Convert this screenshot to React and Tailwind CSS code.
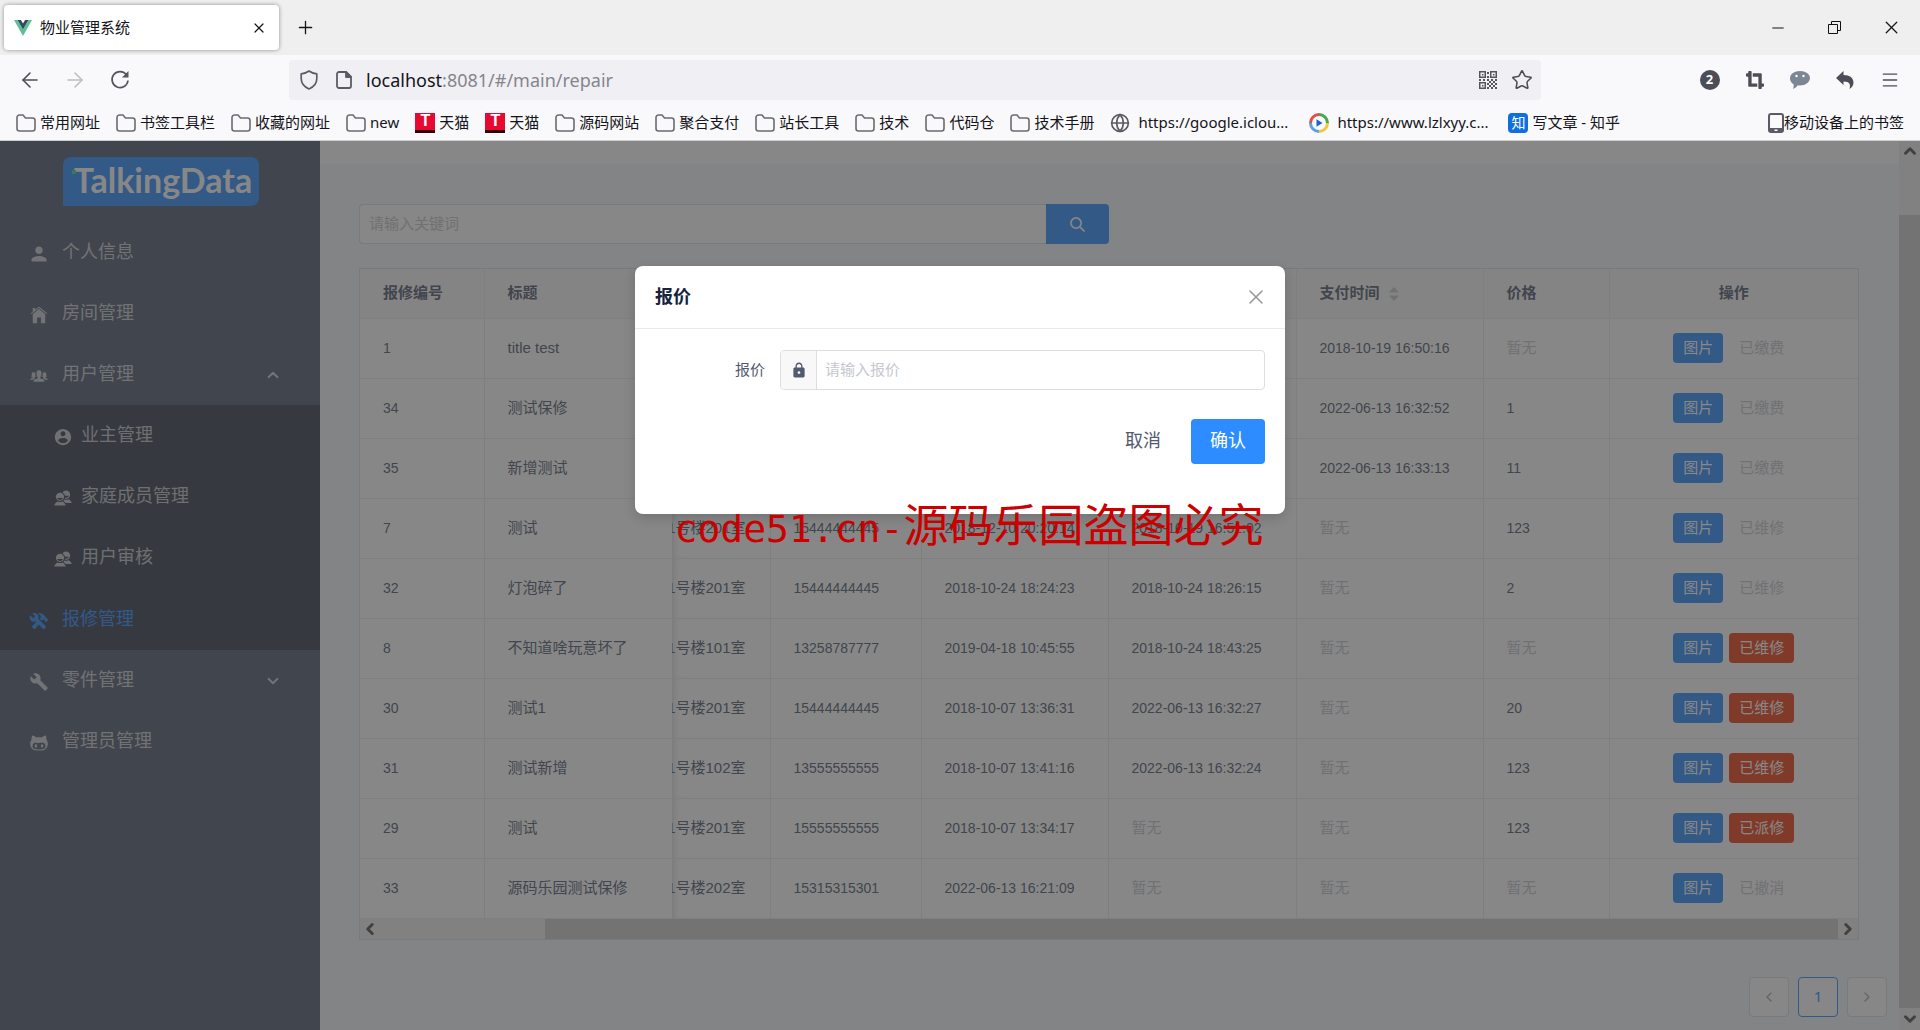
import React, { useState } from "react";
import {
  IoMdPerson,
  IoIosHome,
  IoMdContact,
  IoMdContacts,
  IoIosPeople,
  IoMdConstruct,
  IoMdBuild,
  IoMdLock,
  IoIosSearch,
  IoLogoOctocat,
} from "react-icons/io";
import { FaCropAlt } from "react-icons/fa";
import {
  ArrowLeft,
  ArrowRight,
  ChevronDown,
  ChevronLeft,
  ChevronRight,
  ChevronUp,
  Globe,
  Menu,
  Minus,
  Plus,
  Star,
  X,
} from "lucide-react";

const bookmarks = [
  { icon: "folder", label: "常用网址" },
  { icon: "folder", label: "书签工具栏" },
  { icon: "folder", label: "收藏的网址" },
  { icon: "folder", label: "new" },
  { icon: "tmall", label: "天猫" },
  { icon: "tmall", label: "天猫" },
  { icon: "folder", label: "源码网站" },
  { icon: "folder", label: "聚合支付" },
  { icon: "folder", label: "站长工具" },
  { icon: "folder", label: "技术" },
  { icon: "folder", label: "代码仓" },
  { icon: "folder", label: "技术手册" },
  { icon: "globe", label: "https://google.iclou...", wide: true },
  { icon: "player", label: "https://www.lzlxyy.c...", wide: true },
  { icon: "zhihu", label: "写文章 - 知乎" },
];

const rows = [
  { id: "1", title: "title test", paid: "2018-10-19 16:50:16", status: "已缴费" },
  { id: "34", title: "测试保修", paid: "2022-06-13 16:32:52", price: "1", status: "已缴费" },
  { id: "35", title: "新增测试", paid: "2022-06-13 16:33:13", price: "11", status: "已缴费" },
  { id: "7", title: "测试", room: "1号楼201室", phone: "15444444445", created: "2018-12-10 20:20:14", fixed: "2018-10-19 16:51:02", price: "123", status: "已维修" },
  { id: "32", title: "灯泡碎了", room: "1号楼201室", phone: "15444444445", created: "2018-10-24 18:24:23", fixed: "2018-10-24 18:26:15", price: "2", status: "已维修" },
  { id: "8", title: "不知道啥玩意坏了", room: "1号楼101室", phone: "13258787777", created: "2019-04-18 10:45:55", fixed: "2018-10-24 18:43:25", status: "已维修", active: true },
  { id: "30", title: "测试1", room: "1号楼201室", phone: "15444444445", created: "2018-10-07 13:36:31", fixed: "2022-06-13 16:32:27", price: "20", status: "已维修", active: true },
  { id: "31", title: "测试新增", room: "1号楼102室", phone: "13555555555", created: "2018-10-07 13:41:16", fixed: "2022-06-13 16:32:24", price: "123", status: "已维修", active: true },
  { id: "29", title: "测试", room: "1号楼201室", phone: "15555555555", created: "2018-10-07 13:34:17", fixed: "暂无", price: "123", status: "已派修", active: true },
  { id: "33", title: "源码乐园测试保修", room: "1号楼202室", phone: "15315315301", created: "2022-06-13 16:21:09", fixed: "暂无", status: "已撤消" },
];

const VueLogo = () => (
  <svg width="18" height="16" viewBox="0 0 18 16">
    <path d="M0 0h3.6L9 9.4 14.4 0H18L9 16z" fill="#5fbf94" />
    <path d="M3.6 0h3.3L9 3.6 11.1 0h3.3L9 9.4z" fill="#35495e" />
  </svg>
);

const FolderIcon = () => (
  <svg width="20" height="18" viewBox="0 0 20 18" fill="none" stroke="#6b6b70" strokeWidth="1.6">
    <path d="M1 14.5v-11A2.5 2.5 0 0 1 3.5 1H7l2.5 3h7A2.5 2.5 0 0 1 19 6.5v8a2.5 2.5 0 0 1-2.5 2.5h-13A2.5 2.5 0 0 1 1 14.5z" />
  </svg>
);

const PlayerIcon = () => (
  <svg width="20" height="20" viewBox="0 0 20 20" fill="none" strokeWidth="3" className="mr-1">
    <path d="M10 1.5A8.5 8.5 0 0 1 18.5 10" stroke="#46a84e" />
    <path d="M18.5 10A8.5 8.5 0 0 1 10 18.5" stroke="#f4c542" />
    <path d="M10 18.5A8.5 8.5 0 0 1 1.5 10" stroke="#5aa0ea" />
    <path d="M1.5 10A8.5 8.5 0 0 1 10 1.5" stroke="#e2504a" />
    <path d="M7.5 6.2l6 3.8-6 3.8z" fill="#1f5fd0" />
  </svg>
);

const BookmarkIcon = ({ type }) => {
  if (type === "folder") return <FolderIcon />;
  if (type === "globe") return <Globe size={20} strokeWidth={2} className="mr-1 text-[#5b5b66]" />;
  if (type === "player") return <PlayerIcon />;
  if (type === "zhihu")
    return (
      <span className="flex h-5 w-5 items-center justify-center rounded-sm bg-[#0f6fe0] text-[14px] leading-none text-white">知</span>
    );
  return (
    <span className="flex h-5 w-5 items-center justify-center border-b-3 border-[#3a000a] bg-[#e60a33] font-['Liberation_Sans'] text-[16px] font-bold leading-none text-white">
      T
    </span>
  );
};

const ReloadIcon = () => (
  <svg width="20" height="20" viewBox="0 0 20 20" fill="none" stroke="#55555e" strokeWidth="1.7">
    <path d="M16.6 5A8 8 0 1 0 18 10.5" />
    <path d="M18.5 1v6.5H12z" fill="#55555e" stroke="none" />
  </svg>
);

const ShieldIcon = () => (
  <svg width="20" height="20" viewBox="0 0 20 20" fill="none" stroke="#5b5b66" strokeWidth="1.7" strokeLinejoin="round">
    <path d="M10 1c2.2 1.6 5 2.6 7.8 2.9v4.6c0 4.3-3 8.3-7.8 10.5-4.8-2.2-7.8-6.2-7.8-10.5V3.9C5 3.6 7.8 2.6 10 1z" />
  </svg>
);

const PageIcon = () => (
  <svg width="16" height="18" viewBox="0 0 16 18" fill="none" stroke="#5b5b66" strokeWidth="1.8" strokeLinejoin="round">
    <path d="M3 1h7l5 5v9a2 2 0 0 1-2 2H3a2 2 0 0 1-2-2V3a2 2 0 0 1 2-2z" />
    <path d="M10 1v5h5z" fill="#5b5b66" />
  </svg>
);

const QrIcon = () => (
  <svg width="18" height="18" viewBox="0 0 18 18" fill="#55555e">
    <path fillRule="evenodd" d="M0 0h7v7H0zM1.5 1.5v4h4v-4zM11 0h7v7h-7zM12.5 1.5v4h4v-4zM0 11h7v7H0zM1.5 12.5v4h4v-4z" />
    <path d="M3 3h1.5v1.5H3zM14 3h1.5v1.5H14zM3 14h1.5v1.5H3zM8 1h2v2H8zM8 5h2v2H8zM0 8h2v2H0zM4 8h2v2H4zM8 8h2v2H8zM12 8h2v2h-2zM16 8h2v2h-2zM10 10h2v2h-2zM14 10h2v2h-2zM8 12h2v2H8zM12 12h2v2h-2zM16 12h2v2h-2zM10 14h2v2h-2zM14 14h2v2h-2zM8 16h2v2H8zM12 16h2v2h-2zM16 16h2v2h-2z" />
  </svg>
);

const PhoneIcon = () => (
  <svg width="16" height="20" viewBox="0 0 16 20">
    <path fillRule="evenodd" fill="#5b5b66" d="M3 0h10a3 3 0 0 1 3 3v14a3 3 0 0 1-3 3H3a3 3 0 0 1-3-3V3a3 3 0 0 1 3-3zM2 3v12h12V3a1 1 0 0 0-1-1H3a1 1 0 0 0-1 1zM6.5 16.5V18h3v-1.5z" />
  </svg>
);

const RestoreIcon = () => (
  <svg width="13" height="13" viewBox="0 0 13 13" fill="none" stroke="#111">
    <path d="M.5 3.5h9v9h-9zM3.5 3.5v-3h9v9h-3" />
  </svg>
);

const BrowserChrome = () => (
  <header className="border-b border-[#cfcfd2] bg-[#f9f9fb] font-['Noto_Sans','Noto_Sans_CJK_SC',sans-serif] text-[15px] text-[#15141a]">
    <div className="flex h-[55px] items-center bg-[#efefef] pl-1">
      <div className="flex h-[45px] w-[275px] items-center gap-2 rounded bg-white pr-2 pl-[10px] shadow-[0_0_4px_rgba(0,0,0,0.4)]">
        <VueLogo />
        <span className="flex-1">物业管理系统</span>
        <button aria-label="关闭标签页" className="px-1">
          <X size={16} strokeWidth={1.8} />
        </button>
      </div>
      <button aria-label="新标签页" className="ml-4">
        <Plus size={21} strokeWidth={1.5} />
      </button>
      <div className="ml-auto flex">
        <button aria-label="最小化" className="flex w-[57px] items-center justify-center">
          <Minus size={18} strokeWidth={1.5} />
        </button>
        <button aria-label="还原" className="flex w-[57px] items-center justify-center">
          <RestoreIcon />
        </button>
        <button aria-label="关闭" className="flex w-[57px] justify-center">
          <X size={21} strokeWidth={1.5} />
        </button>
      </div>
    </div>

    <div className="flex items-center py-[5px] pr-2 text-[#4d4d57]">
      <div className="flex w-[289px] pl-[7px]">
        <button aria-label="后退" className="flex w-[45px] justify-center">
          <ArrowLeft size={24} strokeWidth={1.6} />
        </button>
        <button aria-label="前进" className="flex w-[45px] justify-center text-[#bdbdc2]">
          <ArrowRight size={24} strokeWidth={1.6} />
        </button>
        <button aria-label="刷新" className="flex w-[45px] items-center justify-center">
          <ReloadIcon />
        </button>
      </div>
      <div className="flex h-10 flex-1 items-center rounded bg-[#f0f0f4] pl-[10px] pr-2">
        <ShieldIcon />
        <span className="ml-[17px]">
          <PageIcon />
        </span>
        <span className="ml-[14px] flex-1 text-[18px] text-[#85858c]">
          <span className="text-[#15141a]">localhost</span>:8081/#/main/repair
        </span>
        <QrIcon />
        <Star size={22} strokeWidth={1.7} className="ml-[14px]" />
      </div>
      <div className="ml-[146px] flex items-center">
        <span className="flex w-[45px] justify-center">
          <span className="flex h-5 w-5 items-center justify-center rounded-full bg-[#4d4d57] text-[13px] font-bold text-white">2</span>
        </span>
        <span className="flex w-[45px] justify-center">
          <FaCropAlt size={18} />
        </span>
        <span className="flex w-[45px] justify-center">
          <svg width="20" height="18" viewBox="0 0 20 18">
            <path d="M10 0c5.5 0 10 3 10 7s-4.5 7.5-10 7.5c-.8 0-1.6 0-2.3-.2C6.5 16 5 17.3 3 18c.6-1.3.8-3 .6-4.7C1.4 12 0 9.8 0 7.4 0 3 4.5 0 10 0z" fill="#7b8794" />
            <circle cx="6.5" cy="5" r="1.2" fill="#fff" />
            <circle cx="13.5" cy="5" r="1.2" fill="#fff" />
          </svg>
        </span>
        <span className="flex w-[45px] justify-center">
          <svg width="18" height="18" viewBox="0 0 18 18">
            <path d="M7.5 0v4C14 4 17.5 7 17.5 11.5c0 2.7-1.5 5-4 6.5 1.2-4 .5-7.5-6-7.5V14L0 7z" fill="#4d4d57" />
          </svg>
        </span>
        <button aria-label="菜单" className="flex w-[45px] justify-center">
          <Menu size={20} strokeWidth={1.6} />
        </button>
      </div>
    </div>

    <nav className="flex h-[35px] items-center gap-4 whitespace-nowrap px-4">
      {bookmarks.map((item, i) => (
        <a key={i} href="#" className="flex items-center gap-1">
          <BookmarkIcon type={item.icon} />
          <span className={item.wide ? "w-[155px]" : ""}>{item.label}</span>
        </a>
      ))}
      <a href="#" className="ml-auto flex items-center">
        <PhoneIcon />
        移动设备上的书签
      </a>
    </nav>
  </header>
);

const MenuItem = ({ icon: Icon, label, sub, active, arrow: Arrow }) => (
  <a
    href="#"
    className={`flex h-[61px] items-center text-[18px] ${sub ? "gap-2 pl-[53px]" : "gap-[13px] pl-[29px]"} ${
      active ? "bg-[#363e4f] text-[#2d8cff]" : "text-white/70"
    }`}
  >
    <Icon size={20} className="mt-[2px]" />
    {label}
    {Arrow && <Arrow size={18} strokeWidth={2.5} className="ml-auto mr-[38px]" />}
  </a>
);

const Sidebar = () => (
  <aside className="w-[320px] shrink-0 bg-[#515a6e]">
    <div className="flex pt-4 pb-4 pl-[63px]">
      <div className="relative flex h-[49px] w-[196px] items-center justify-center rounded-lg rounded-bl-none bg-[#2d8cff] pb-1 pl-1 font-['Lato'] text-[34px] font-bold text-white">
        TalkingData
        <span className="absolute left-[9px] top-[13px] h-1 w-1 bg-[#3ad6a8]" />
      </div>
    </div>
    <nav>
      <MenuItem icon={IoMdPerson} label="个人信息" />
      <MenuItem icon={IoIosHome} label="房间管理" />
      <MenuItem icon={IoIosPeople} label="用户管理" arrow={ChevronUp} />
      <div className="bg-[#363e4f] pb-px">
        <MenuItem icon={IoMdContact} label="业主管理" sub />
        <MenuItem icon={IoMdContacts} label="家庭成员管理" sub />
        <MenuItem icon={IoMdContacts} label="用户审核" sub />
      </div>
      <MenuItem icon={IoMdConstruct} label="报修管理" active />
      <MenuItem icon={IoMdBuild} label="零件管理" arrow={ChevronDown} />
      <MenuItem icon={IoLogoOctocat} label="管理员管理" />
    </nav>
  </aside>
);

// numbers and dates run a size smaller than Chinese text
const Value = ({ children }) =>
  !children || children === "暂无" ? (
    <span className="text-[#c5c8ce]">暂无</span>
  ) : (
    <span className="text-[14px]">{children}</span>
  );

const RepairTable = () => (
  <div className="overflow-hidden border border-[#dcdee2] bg-white">
    <table className="w-full table-fixed border-collapse whitespace-nowrap text-left">
      <colgroup>
        <col className="w-[124px]" />
        <col className="w-[188px]" />
        <col className="w-[98px]" />
        <col className="w-[151px]" />
        <col className="w-[187px]" />
        <col className="w-[188px]" />
        <col className="w-[187px]" />
        <col className="w-[126px]" />
        <col className="w-[249px]" />
      </colgroup>
      <thead>
        <tr className="h-[49px] bg-[#f8f8f9]">
          <th className="border-r border-b border-[#e8eaec] px-[23px]">报修编号</th>
          <th className="border-b border-[#e8eaec] px-[23px]">标题</th>
          <th className="border-r border-b border-[#e8eaec]"></th>
          <th className="border-r border-b border-[#e8eaec]"></th>
          <th className="border-r border-b border-[#e8eaec]"></th>
          <th className="border-r border-b border-[#e8eaec]"></th>
          <th className="border-r border-b border-[#e8eaec] px-[23px]">
            <span className="flex items-center gap-[9px]">
              支付时间
              <svg width="10" height="14" viewBox="0 0 10 14" fill="#c5c8ce" className="mt-[2px]">
                <path d="M5 0l5 5.5H0zM5 14l5-5.5H0z" />
              </svg>
            </span>
          </th>
          <th className="border-r border-b border-[#e8eaec] px-[23px]">价格</th>
          <th className="border-b border-[#e8eaec] text-center">操作</th>
        </tr>
      </thead>
      <tbody>
        {rows.map((row) => (
          <tr key={row.id} className="h-[60px]">
            <td className="border-r border-b border-[#e8eaec] px-[23px]">
              <Value>{row.id}</Value>
            </td>
            <td className="border-b border-[#e8eaec] px-[23px]">{row.title}</td>
            <td className="border-r border-b border-[#e8eaec] p-0 shadow-[inset_6px_0_6px_-4px_rgba(0,0,0,0.15)]">
              <div className="flex justify-end overflow-hidden pr-6">{row.room}</div>
            </td>
            <td className="border-r border-b border-[#e8eaec] px-[23px]">{row.phone && <Value>{row.phone}</Value>}</td>
            <td className="border-r border-b border-[#e8eaec] px-[23px]">{row.created && <Value>{row.created}</Value>}</td>
            <td className="border-r border-b border-[#e8eaec] px-[23px]">{row.fixed && <Value>{row.fixed}</Value>}</td>
            <td className="border-r border-b border-[#e8eaec] px-[23px]">
              <Value>{row.paid}</Value>
            </td>
            <td className="border-r border-b border-[#e8eaec] px-[23px]">
              <Value>{row.price}</Value>
            </td>
            <td className="border-b border-[#e8eaec]">
              <div className="flex justify-center gap-[6px]">
                <button className="h-[30px] rounded bg-[#2d8cff] px-[10px] text-white">图片</button>
                {row.active ? (
                  <button className="h-[30px] rounded bg-[#ed4014] px-[10px] text-white">{row.status}</button>
                ) : (
                  <button disabled className="h-[30px] px-[10px] text-[#c5c8ce]">
                    {row.status}
                  </button>
                )}
              </div>
            </td>
          </tr>
        ))}
      </tbody>
    </table>
    <div className="flex h-5 bg-[#f0f0f0] text-[#505050]">
      <span className="flex w-5 items-center justify-center">
        <ChevronLeft size={18} strokeWidth={4} />
      </span>
      <span className="w-[165px]" />
      <span className="flex-1 bg-[#cdcdcd]" />
      <span className="flex w-5 items-center justify-center">
        <ChevronRight size={18} strokeWidth={4} />
      </span>
    </div>
  </div>
);

const PriceModal = () => {
  const [price, setPrice] = useState("");

  return (
    <div
      role="dialog"
      aria-labelledby="price-title"
      className="w-[650px] rounded-lg bg-white pb-[50px] shadow-[0_4px_12px_rgba(0,0,0,0.15)]"
    >
      <div className="flex h-[63px] items-center justify-between border-b border-[#e8eaec] px-5">
        <h2 id="price-title" className="text-[18px] font-bold text-[#17233d]">
          报价
        </h2>
        <button aria-label="关闭" className="text-[#999]">
          <X size={24} strokeWidth={1.6} className="-mr-[3px]" />
        </button>
      </div>
      <form className="px-5 pt-[21px]" onSubmit={(e) => e.preventDefault()}>
        <div className="flex items-center">
          <label htmlFor="price" className="w-[125px] pr-[15px] text-right">
            报价
          </label>
          <div className="flex h-10 flex-1 overflow-hidden rounded border border-[#dcdee2]">
            <span className="flex w-9 items-center justify-center border-r border-[#dcdee2] bg-[#f8f8f9]">
              <IoMdLock size={18} />
            </span>
            <input
              id="price"
              type="text"
              placeholder="请输入报价"
              value={price}
              onChange={(e) => setPrice(e.target.value)}
              className="flex-1 px-2 outline-none placeholder:text-[#c5c8ce]"
            />
          </div>
        </div>
        <div className="mt-[29px] flex justify-end gap-[10px] text-[18px]">
          <button type="button" className="h-[45px] px-5">
            取消
          </button>
          <button type="submit" className="h-[45px] rounded bg-[#2d8cff] px-[19px] text-white">
            确认
          </button>
        </div>
      </form>
    </div>
  );
};

const App = () => {
  const [keyword, setKeyword] = useState("");

  return (
    <div className="flex min-h-screen flex-col">
      <BrowserChrome />
      <div className="relative flex flex-1 font-['Liberation_Sans','Noto_Sans_CJK_SC',sans-serif] text-[15px] text-[#515a6e]">
        <Sidebar />
        <main className="min-w-0 flex-1 bg-[#f5f7f9]">
          <div className="h-[23px] bg-white" />
          <div className="pt-10 pr-10 pl-[39px]">
            <form className="mb-6 flex h-10 w-1/2" onSubmit={(e) => e.preventDefault()}>
              <input
                type="text"
                aria-label="关键词"
                placeholder="请输入关键词"
                value={keyword}
                onChange={(e) => setKeyword(e.target.value)}
                className="min-w-0 flex-1 rounded-l border border-r-0 border-[#dcdee2] bg-white px-[9px] placeholder:text-[#c5c8ce]"
              />
              <button aria-label="搜索" className="flex w-[63px] items-center justify-center rounded-r bg-[#2d8cff] text-white">
                <IoIosSearch size={19} stroke="currentColor" strokeWidth={14} />
              </button>
            </form>
            <RepairTable />
          </div>
          <div className="mt-[37px] mr-3 mb-3 flex justify-end gap-[9px]">
            <button aria-label="上一页" className="flex h-10 w-10 items-center justify-center rounded border border-[#dcdee2] bg-white text-[#a5a8ae]">
              <ChevronLeft size={16} />
            </button>
            <button className="h-10 w-10 rounded border border-[#2d8cff] bg-white font-['Noto_Sans'] text-[#2d8cff]">1</button>
            <button aria-label="下一页" className="flex h-10 w-10 items-center justify-center rounded border border-[#dcdee2] bg-white text-[#a5a8ae]">
              <ChevronRight size={16} />
            </button>
          </div>
        </main>
        <div className="flex w-[21px] flex-col bg-[#f0f0f0] text-[#505050]">
          <span className="flex h-5 items-center justify-center">
            <ChevronUp size={18} strokeWidth={4} />
          </span>
          <span className="h-[54px]" />
          <span className="flex-1 bg-[#cdcdcd]" />
          <span className="flex h-[22px] items-center justify-center">
            <ChevronDown size={18} strokeWidth={4} />
          </span>
        </div>

        <div className="absolute inset-0 flex items-start justify-center bg-[rgba(55,55,55,0.6)] pt-[125px]">
          <PriceModal />
        </div>
        <p className="pointer-events-none absolute inset-x-0 top-[350px] pl-[18px] text-center font-['DejaVu_Sans_Mono','Noto_Sans_CJK_SC',monospace] text-[38px] leading-[64px] text-[#cc0000]">
          code51.cn-<span className="font-['Noto_Sans_CJK_SC'] text-[45px]">源码乐园盗图必究</span>
        </p>
      </div>
    </div>
  );
};

export default App;
